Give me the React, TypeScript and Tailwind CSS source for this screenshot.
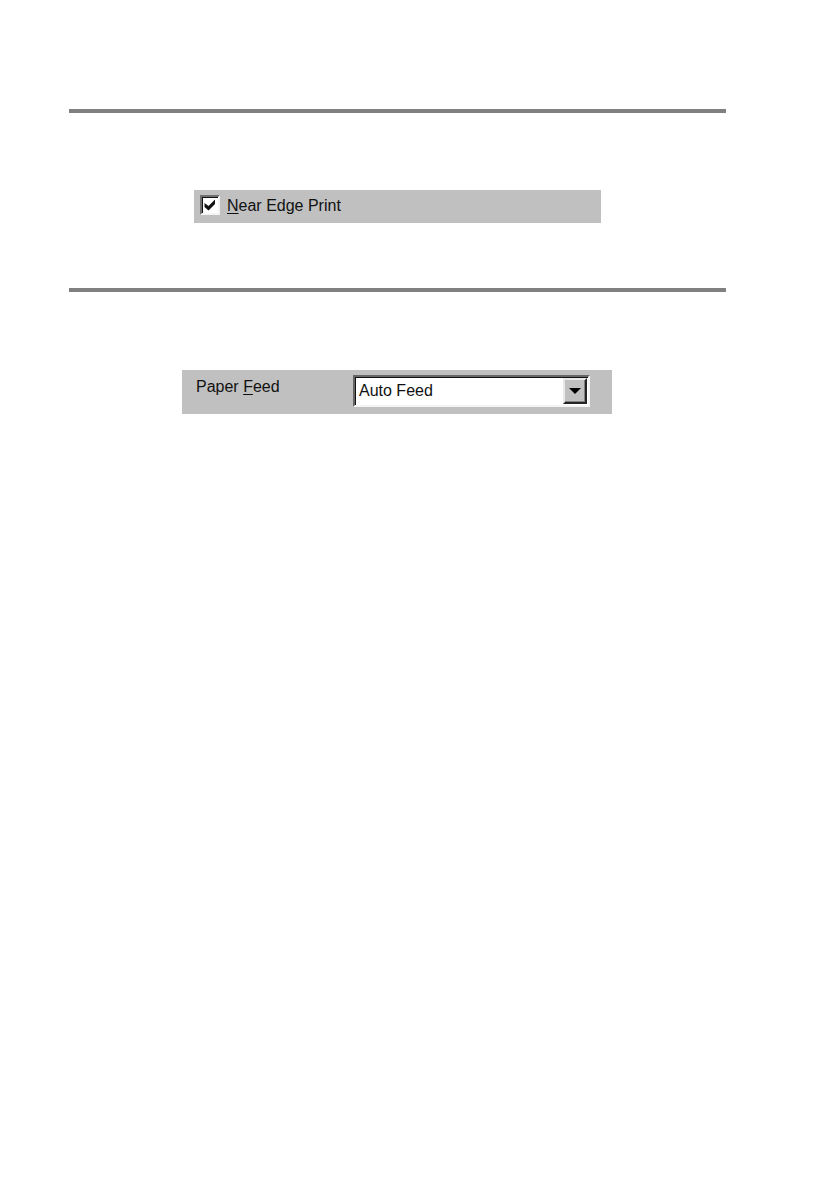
import React, { useState } from 'react';

const FEED_OPTIONS = ['Auto Feed', 'Manual Feed', 'Upper Tray', 'Lower Tray'];

function Section({ children }: { children: React.ReactNode }) {
  return (
    <section className="border-t-4 border-[#808080]">
      {children}
    </section>
  );
}

export default function App() {
  const [nearEdge, setNearEdge] = useState(true);
  const [feed, setFeed] = useState('Auto Feed');

  return (
    <main className="min-h-screen bg-white pt-[109px] pl-[69px] pr-28 font-['Liberation_Sans',Arial,sans-serif] text-base leading-6 text-[#111111]">
      <Section>
        <div className="mt-[77px] mr-[125px] mb-[65px] ml-[125px] flex h-[33px] items-start bg-[#c0c0c0] pl-1.5 pt-[5px]">
          <label className="flex items-start gap-[7px] leading-[22px]">
            <span className="relative flex">
              <input
                type="checkbox"
                checked={nearEdge}
                onChange={(e) => setNearEdge(e.target.checked)}
                className="h-5 w-5 appearance-none border-2 border-t-[#707070] border-l-[#707070] border-r-[#f4f4f4] border-b-[#f4f4f4] bg-white shadow-[inset_1px_1px_0_#111111]"
              />
              {nearEdge && (
                <svg className="pointer-events-none absolute left-1 top-1 h-3 w-3" viewBox="0 0 12 12" fill="#111111">
                  <path d="M0.500 4L4.500 7L11 0.500V5L4.500 11.500L0.500 8Z" />
                </svg>
              )}
            </span>
            <span><u className="underline-offset-2">N</u>ear Edge Print</span>
          </label>
        </div>
      </Section>

      <Section>
        <div className="mt-[78px] mr-[114px] ml-[113px] flex h-11 items-start bg-[#c0c0c0] pl-3.5 pr-[22px] pt-[5px]">
          <label htmlFor="paper-feed" className="w-[157px] shrink-0">
            Paper <u className="underline-offset-2">F</u>eed
          </label>
          <div className="relative min-w-0 flex-1">
            <select
              id="paper-feed"
              value={feed}
              onChange={(e) => setFeed(e.target.value)}
              className="block h-8 w-full appearance-none rounded-none border-2 border-t-[#666666] border-l-[#666666] border-r-[#f4f4f4] border-b-[#f4f4f4] bg-white pl-1 pr-7 shadow-[inset_1px_1px_0_#111111]"
            >
              {FEED_OPTIONS.map((option) => (
                <option key={option}>{option}</option>
              ))}
            </select>
            <span className="pointer-events-none absolute top-[3px] right-[3px] bottom-[3px] flex w-6 items-center justify-center border-2 border-t-[#e8e8e8] border-l-[#e8e8e8] border-r-[#222222] border-b-[#222222] bg-[#c0c0c0] shadow-[inset_-1px_-1px_0_#808080]">
              <svg className="h-1.5 w-3" viewBox="0 0 12 6" fill="#000000">
                <path d="M0 0H12L6 6Z" />
              </svg>
            </span>
          </div>
        </div>
      </Section>
    </main>
  );
}
